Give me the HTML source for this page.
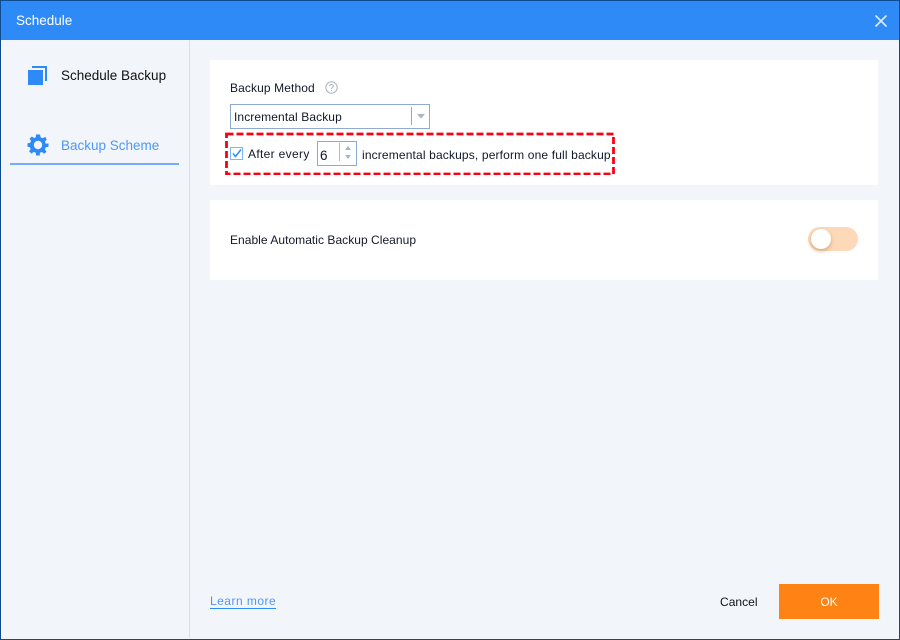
<!DOCTYPE html>
<html><head><meta charset="utf-8"><style>
html,body{margin:0;padding:0;width:900px;height:640px;overflow:hidden;background:#f2f5fa}
body{position:relative;font-family:"Liberation Sans",sans-serif;font-size:12px;color:#111827}
div,span,svg{position:absolute}
.t{white-space:nowrap;line-height:16px}
</style></head><body>
<div style="left:0;top:0;width:898px;height:638px;border:1px solid #0f4c8f;background:#f2f5fa"></div>
<div style="left:1px;top:1px;width:898px;height:39px;background:#2e8af7"></div>
<div class="t" style="left:16px;top:13px;color:#fff;font-size:13.5px">Schedule</div>
<svg style="left:874px;top:13.500px" width="14" height="14" viewBox="0 0 14 14"><path d="M1.500 1.500L12.500 12.500M12.500 1.500L1.500 12.500" stroke="#dcebff" stroke-width="1.600" fill="none"/></svg>
<div style="left:189px;top:40px;width:1px;height:598px;background:#dadfe6"></div>

<svg style="left:28px;top:66px" width="20" height="20" viewBox="0 0 20 20"><path d="M4 0H19V15H17V2H4Z" fill="#2e8af7"/><rect x="0" y="4" width="15" height="15" fill="#2e8af7"/></svg>
<div class="t" style="left:61px;top:68px;font-size:13.500px;color:#111">Schedule Backup</div>

<svg style="left:27px;top:134px" width="22" height="22" viewBox="0 0 22 22"><path d="M9 0.500H13L13.600 3.300L15.800 4.200L18.200 2.700L19.700 5.500L18 7.600L18.600 9.600L21.500 9.500V12.800L18.700 13.300L17.900 15.500L19.500 17.800L17 19.700L15 18L12.900 18.800L12.800 21.500H9.200L8.800 18.800L6.700 17.900L4.500 19.600L2 17.300L3.700 15.200L2.900 13.100L0.500 12.800V9.300L3.200 8.900L4 6.800L2.500 4.700L4.900 2.500L7 4L8.800 3.200Z" fill="#2e8af7"/><circle cx="11" cy="11" r="4.200" fill="#f2f5fa"/></svg>
<div class="t" style="left:61px;top:138px;font-size:13.500px;color:#4f97f5">Backup Scheme</div>
<div style="left:10px;top:163px;width:169px;height:2px;background:#72aef8"></div>

<div style="left:210px;top:60px;width:668px;height:125px;background:#fff"></div>
<div class="t" style="left:230px;top:80px;letter-spacing:.11px">Backup Method</div>
<svg style="left:325px;top:81px" width="13" height="13" viewBox="0 0 13 13"><circle cx="6.500" cy="6.500" r="5.700" fill="none" stroke="#a9b3bf"/><path d="M4.700 5.200C4.700 3 8.300 3 8.300 5.100C8.300 6.500 6.500 6.300 6.500 8" fill="none" stroke="#a9b3bf"/><rect x="6" y="9" width="1" height="1.200" fill="#a9b3bf"/></svg>

<div style="left:230px;top:104px;width:198px;height:23px;border:1px solid #8fa9d0;background:#fff"></div>
<div class="t" style="left:234px;top:109px;letter-spacing:.1px">Incremental Backup</div>
<div style="left:411px;top:107px;width:1px;height:18px;background:#8fa9d0"></div>
<svg style="left:417px;top:114px" width="8" height="5" viewBox="0 0 8 5"><path d="M0 0H8L4 4.500Z" fill="#a7b5c9"/></svg>

<svg style="left:225px;top:132px" width="390" height="43" viewBox="0 0 390 43"><rect x="1.500" y="2" width="387" height="40" fill="none" stroke="#fb0012" stroke-width="2.800" stroke-dasharray="7 3"/></svg>

<svg style="left:230px;top:147px" width="13" height="13" viewBox="0 0 13 13"><rect x=".5" y=".5" width="12" height="12" fill="#fff" stroke="#7db5f7"/><path d="M3 6.500L5.500 9.500L11 2.500" fill="none" stroke="#2e8af7" stroke-width="1.500"/></svg>
<div class="t" style="left:248px;top:146px;letter-spacing:.33px">After every</div>
<div style="left:317px;top:141px;width:38px;height:23px;border:1px solid #8fa9d0;background:#fff"></div>
<div class="t" style="left:320px;top:148px;font-size:13.500px">6</div>
<div style="left:339px;top:143px;width:1px;height:18px;background:#a9bbd6"></div>
<svg style="left:344px;top:145px" width="8" height="15" viewBox="0 0 8 15"><path d="M1 5L4 1L7 5Z" fill="#a7b5c9"/><path d="M1 10H7L4 14Z" fill="#a7b5c9"/></svg>
<div class="t" style="left:362px;top:147px;letter-spacing:.15px">incremental backups, perform one full backup</div>

<div style="left:210px;top:200px;width:668px;height:80px;background:#fff"></div>
<div class="t" style="left:230px;top:232px;letter-spacing:.04px">Enable Automatic Backup Cleanup</div>
<div style="left:808px;top:227px;width:50px;height:24px;border-radius:12px;background:#fdd9ba"></div>
<div style="left:811px;top:229px;width:20px;height:20px;border-radius:50%;background:#fff;box-shadow:0 2px 4px rgba(190,125,60,.55)"></div>

<div class="t" style="left:210px;top:594px;color:#4f97f5;letter-spacing:.48px;border-bottom:1px solid #2e8af7;line-height:14px">Learn more</div>
<div class="t" style="left:720px;top:594px;color:#111;letter-spacing:.03px">Cancel</div>
<div style="left:779px;top:584px;width:100px;height:35px;background:#ff8314"></div>
<div class="t" style="left:779px;top:594px;width:100px;text-align:center;color:#fff">OK</div>
</body></html>
